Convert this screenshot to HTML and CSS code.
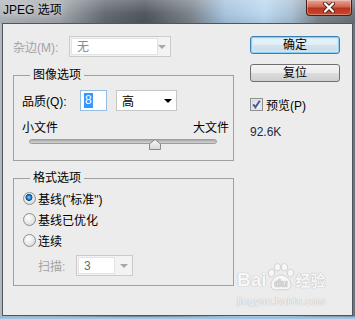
FILE: index.html
```html
<!DOCTYPE html>
<html lang="zh-CN">
<head>
  <meta charset="UTF-8">
  <title>JPEG 选项</title>
  <link rel="stylesheet" href="styles.css">
</head>
<body>
  <div class="window">
    <div class="titlebar">
      <span class="title">JPEG 选项</span>
      <div class="close">
        <svg width="14" height="11" viewBox="0 0 14 11">
          <path d="M3 1.5 L11 9.5 M11 1.5 L3 9.5" stroke="#5a2418" stroke-width="4" stroke-linecap="round"/>
          <path d="M3 1.5 L11 9.5 M11 1.5 L3 9.5" stroke="#fff" stroke-width="2.2" stroke-linecap="round"/>
        </svg>
      </div>
    </div>

    <div class="client">
      <div class="main">
        <div class="row matte">
          <span class="label disabled">杂边(M):</span>
          <div class="combo combo-disabled matte-combo">
            <span class="field">无</span>
            <span class="arrow arrow-gray"></span>
          </div>
        </div>

        <fieldset class="group image-group">
          <legend>图像选项</legend>
          <div class="row quality">
            <span class="label">品质(Q):</span>
            <span class="text-input"><span class="sel">8</span></span>
            <div class="combo quality-combo">
              <span class="value">高</span>
              <span class="arrow"></span>
            </div>
          </div>
          <div class="size-labels">
            <span>小文件</span>
            <span>大文件</span>
          </div>
          <div class="slider">
            <div class="track"></div>
            <svg class="thumb" width="12" height="11" viewBox="0 0 12 11">
              <defs>
                <linearGradient id="tg" x1="0" y1="0" x2="0" y2="1">
                  <stop offset="0" stop-color="#fbfbfb"/>
                  <stop offset="1" stop-color="#d6d6d6"/>
                </linearGradient>
              </defs>
              <polygon points="0.5,10.5 0.5,5 6,0.5 11.5,5 11.5,10.5" fill="url(#tg)" stroke="#8a8a8a"/>
            </svg>
          </div>
        </fieldset>

        <fieldset class="group format-group">
          <legend>格式选项</legend>
          <div class="radios">
            <div class="radio"><span class="dot checked"></span>基线("标准")</div>
            <div class="radio"><span class="dot"></span>基线已优化</div>
            <div class="radio"><span class="dot"></span>连续</div>
          </div>
          <div class="row scans">
            <span class="label disabled">扫描:</span>
            <div class="combo combo-disabled scans-combo">
              <span class="field field-dim">3</span>
              <span class="arrow arrow-gray"></span>
            </div>
          </div>
        </fieldset>
      </div>

      <div class="side">
        <button class="btn btn-default">确定</button>
        <button class="btn">复位</button>
        <label class="check">
          <svg width="13" height="13" viewBox="0 0 13 13">
            <defs>
              <linearGradient id="cg" x1="0" y1="0" x2="1" y2="1">
                <stop offset="0" stop-color="#dcdcdc"/>
                <stop offset="1" stop-color="#fafafa"/>
              </linearGradient>
            </defs>
            <rect x="0.5" y="0.5" width="12" height="12" fill="#f4f4f4" stroke="#8f8f8f"/>
            <rect x="2" y="2" width="9" height="9" fill="url(#cg)" stroke="#c4c4c4" stroke-width="0.6"/>
            <path d="M3.2 6.4 L5.4 9.2 L9.8 2.8" fill="none" stroke="#3f5f98" stroke-width="2"/>
          </svg>
          预览(P)
        </label>
        <div class="size">92.6K</div>
      </div>
    </div>

    <div class="watermark">
      <div class="wm-logo">
        <span class="wm-bai">Bai</span>
        <svg class="wm-paw" width="30" height="28" viewBox="0 0 30 28">
          <g fill="#f7f7f7" stroke="#d2d2d2" stroke-width="1">
            <ellipse cx="5.5" cy="10" rx="3.2" ry="3.8"/>
            <ellipse cx="11.5" cy="4.2" rx="3.2" ry="3.7"/>
            <ellipse cx="18.5" cy="4.2" rx="3.2" ry="3.7"/>
            <ellipse cx="24.5" cy="10" rx="3.2" ry="3.8"/>
            <path d="M5 22.5 C5 16 10.5 12 15 12 C19.5 12 25 16 25 22.5 C25 27 20.5 27.5 15 26.5 C9.5 27.5 5 27 5 22.5 Z"/>
          </g>
          <text x="15" y="24" text-anchor="middle" class="wm-du">du</text>
        </svg>
        <span class="wm-jy">经验</span>
      </div>
      <div class="wm-url">jingyan.baidu.com</div>
    </div>
  </div>
</body>
</html>
```

FILE: styles.css
```css
* {
  margin: 0;
  padding: 0;
  box-sizing: border-box;
}

body {
  width: 355px;
  height: 319px;
  overflow: hidden;
  font-family: "Liberation Sans", "Noto Sans CJK SC", sans-serif;
  font-size: 12px;
  color: #000;
}

.window {
  position: relative;
  width: 355px;
  height: 319px;
  display: flex;
  flex-direction: column;
  padding: 0 2px 3px;
  background:
    linear-gradient(to top, #a4cbe8 0, #8fb9dc 2px, rgba(0,0,0,0) 3px),
    linear-gradient(to bottom, rgba(255,255,255,.22), rgba(255,255,255,0) 14px, rgba(0,0,0,.08) 23px, rgba(0,0,0,0) 24px),
    linear-gradient(to right, #b3b8bd 0, #a2a8ae 60px, #646b73 105px, #50575f 145px, #7c848c 190px, #a6c3dd 225px, #bcd8f0 265px, #a9c0d4 292px, #7f878f 318px, #6c747c 355px);
}

/* 标题栏 */
.titlebar {
  height: 23px;
  display: flex;
  justify-content: space-between;
  align-items: flex-start;
}

.title {
  padding: 2px 0 0 1px;
  line-height: 16px;
  text-shadow: 0 0 6px rgba(255,255,255,.8);
}

.close {
  width: 46px;
  height: 16px;
  margin-right: 1px;
  display: flex;
  align-items: center;
  justify-content: center;
  border: 1px solid #4a1f18;
  border-top: none;
  border-radius: 0 0 4px 4px;
  background: linear-gradient(#e8a698, #d2654f 45%, #b9341e 55%, #c84b31);
  box-shadow: inset 0 0 0 1px rgba(255,255,255,.3);
}

/* 内容区 */
.client {
  flex: 1;
  display: flex;
  background: #ececec;
  border: 1px solid #4e5660;
}

.main {
  width: 231px;
  padding: 12px 0 0 10px;
}

.side {
  width: 90px;
  margin-left: 16px;
  padding-top: 12px;
  display: flex;
  flex-direction: column;
}

.row {
  display: flex;
  align-items: center;
}

.disabled {
  color: #a3a3a3;
}

.matte {
  height: 21px;
}

.matte .label {
  width: 56px;
}

/* 下拉框 */
.combo {
  display: flex;
  align-items: center;
  height: 21px;
  border: 1px solid #c6c6c6;
  background: #fff;
}

.combo .value {
  padding-left: 5px;
}

.combo-disabled {
  padding: 1px;
  border-color: #cbcbcb;
  background: #f3f3f3;
}

.field {
  height: 100%;
  padding-left: 5px;
  line-height: 17px;
  color: #8a8a8a;
  background: #fff;
  border: 1px solid #e3e3e3;
}

.field-dim {
  color: #6a6a6a;
}

.arrow {
  margin-left: auto;
  margin-right: 4px;
  border-left: 4px solid transparent;
  border-right: 4px solid transparent;
  border-top: 4px solid #000;
}

.arrow-gray {
  margin-right: 3px;
  border-top-color: #a8a8a8;
}

.matte-combo {
  width: 102px;
}

.matte-combo .field {
  width: 90px;
}

/* 分组框 */
.group {
  margin-top: 10px;
  border: 1px solid #a0a0a0;
  padding: 0 4px 0 8px;
  min-width: 0;
}

.group legend {
  margin-left: 8px;
  padding: 0 3px;
  line-height: 16px;
}

.image-group {
  padding-bottom: 10px;
}

.format-group {
  margin-top: 9px;
  padding-bottom: 9px;
}

.quality {
  margin-top: 7px;
  height: 21px;
}

.quality .label {
  width: 58px;
}

.text-input {
  width: 27px;
  height: 21px;
  padding: 2px 0 0 3px;
  border: 1px solid #94bde3;
  background: #fff;
}

.text-input .sel {
  display: inline-block;
  padding: 0 1px;
  line-height: 15px;
  color: #fff;
  background: #3399ff;
}

.quality-combo {
  width: 61px;
  margin-left: 9px;
}

.size-labels {
  display: flex;
  justify-content: space-between;
  margin-top: 10px;
  line-height: 15px;
}

/* 滑块 */
.slider {
  position: relative;
  width: 188px;
  height: 11px;
  margin-left: 7px;
}

.track {
  margin-top: 3px;
  height: 5px;
  border: 1px solid #9c9c9c;
  border-radius: 3px;
  background: linear-gradient(#a8a8a8, #d4d4d4);
}

.thumb {
  position: absolute;
  left: 120px;
  top: 0;
}

/* 单选 */
.radios {
  padding-top: 2px;
}

.radio {
  display: flex;
  align-items: center;
  height: 21px;
}

.dot {
  width: 13px;
  height: 13px;
  margin: 0 2px 0 1px;
  border: 1px solid #8e8f8f;
  border-radius: 50%;
  background: radial-gradient(circle at 40% 35%, #fff, #e6e6e6 55%, #cdcdcd);
}

.dot.checked {
  background:
    radial-gradient(circle at 45% 40%, #9edcff 0, #2a8ad8 1.6px, #0f4f8e 3.2px, rgba(15,79,142,0) 3.8px),
    radial-gradient(circle at 40% 35%, #fff, #e6e6e6 55%, #cdcdcd);
}

.scans {
  margin-top: 4px;
  padding-left: 16px;
}

.scans .label {
  width: 38px;
}

.scans-combo {
  width: 57px;
}

.scans-combo .field {
  width: 37px;
}

/* 按钮 */
.btn {
  width: 90px;
  height: 18px;
  font: inherit;
  line-height: 16px;
  color: #000;
  border: 1px solid #707070;
  border-radius: 3px;
  background: linear-gradient(#f3f3f3 0, #ececec 50%, #dddddd 50%, #cfcfcf);
}

.btn + .btn {
  margin-top: 10px;
}

.btn-default {
  border-color: #3c7fb1;
  background: linear-gradient(#eaf4f9 0, #e2eef5 50%, #d3e3ee 50%, #c6dbe9);
  box-shadow: inset 0 0 0 1px #8fd0f2, inset 0 0 2px 2px #cfeaf8;
}

.check {
  display: flex;
  align-items: center;
  gap: 3px;
  height: 13px;
  margin-top: 16px;
}

.size {
  margin-top: 14px;
  line-height: 14px;
  color: #1c2a48;
}

/* 水印 */
.watermark {
  position: absolute;
  left: 237px;
  top: 262px;
  color: #f8f8f8;
  text-shadow: 0 0 1px #b8b8b8, 0 0 1px #b8b8b8;
}

.wm-logo {
  display: flex;
  align-items: flex-end;
  height: 29px;
}

.wm-bai {
  font-family: "Liberation Sans", sans-serif;
  font-weight: bold;
  font-size: 19px;
  line-height: 22px;
}

.wm-paw {
  margin-left: -1px;
}

.wm-du {
  font-family: "Liberation Sans", sans-serif;
  font-weight: bold;
  font-size: 11px;
  fill: #d6d6d6;
}

.wm-jy {
  font-family: "Noto Sans CJK SC", sans-serif;
  font-weight: bold;
  font-size: 15px;
  line-height: 22px;
}

.wm-url {
  margin-top: 3px;
  font-size: 11px;
  line-height: 14px;
}
```
